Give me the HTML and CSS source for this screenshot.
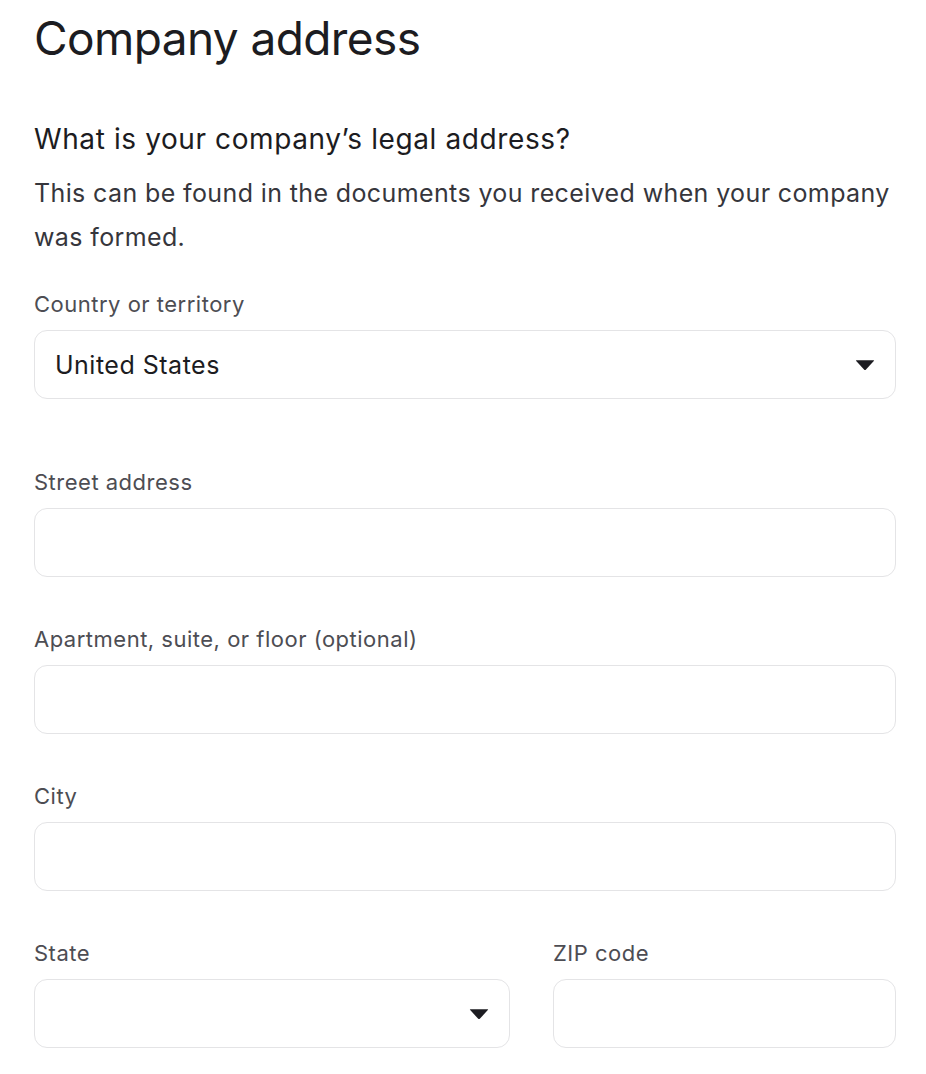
FILE: index.html
```html
<!DOCTYPE html>
<html lang="en">
<head>
<meta charset="utf-8">
<title>Company address</title>
<link rel="stylesheet" href="styles.css">
</head>
<body>
<main class="page">
  <h1 class="title">Company address</h1>
  <h2 class="question">What is your company’s legal address?</h2>
  <p class="hint">This can be found in the documents you received when your company was formed.</p>
  <form class="form">
    <div class="field field-country">
      <label class="label">Country or territory</label>
      <div class="input select">
        <span class="value">United States</span>
        <svg class="caret" width="20" height="12" viewBox="0 0 20 12"><path d="M1.5 1.2 H18.5 Q19.6 1.2 18.8 2.1 L11 10.6 Q10 11.6 9 10.6 L1.2 2.1 Q0.4 1.2 1.5 1.2 Z" fill="#1c1c21"/></svg>
      </div>
    </div>
    <div class="field">
      <label class="label">Street address</label>
      <div class="input"></div>
    </div>
    <div class="field">
      <label class="label">Apartment, suite, or floor (optional)</label>
      <div class="input"></div>
    </div>
    <div class="field">
      <label class="label">City</label>
      <div class="input"></div>
    </div>
    <div class="row">
      <div class="field field-state">
        <label class="label">State</label>
        <div class="input select">
          <span class="value"></span>
          <svg class="caret" width="20" height="12" viewBox="0 0 20 12"><path d="M1.5 1.2 H18.5 Q19.6 1.2 18.8 2.1 L11 10.6 Q10 11.6 9 10.6 L1.2 2.1 Q0.4 1.2 1.5 1.2 Z" fill="#1c1c21"/></svg>
        </div>
      </div>
      <div class="field field-zip">
        <label class="label">ZIP code</label>
        <div class="input"></div>
      </div>
    </div>
  </form>
</main>
</body>
</html>
```
FILE: styles.css
```css
* { box-sizing: border-box; }
html, body { margin: 0; padding: 0; background: #ffffff; }
body {
  font-family: Inter, "Noto Sans", "Liberation Sans", sans-serif;
  color: #1c1c21;
}
.page {
  padding: 0 30px 0 34px;
}
.title {
  margin: 8px 0 0;
  font-size: 46px;
  line-height: 60px;
  font-weight: 400;
  letter-spacing: -0.6px;
  color: #1c1c21;
}
.question {
  margin: 53px 0 0;
  font-size: 28px;
  line-height: 36px;
  font-weight: 400;
  letter-spacing: 0.6px;
  color: #1c1c21;
}
.hint {
  margin: 14px 0 0;
  font-size: 25px;
  line-height: 44px;
  letter-spacing: 0.38px;
  color: #36363c;
}
.form {
  margin-top: 31px;
  display: flex;
  flex-direction: column;
  gap: 48px;
}
.field {
  display: flex;
  flex-direction: column;
  gap: 12px;
}
.field-country { margin-bottom: 21px; }
.label {
  font-size: 22px;
  line-height: 28px;
  letter-spacing: 0.5px;
  color: #4d4d53;
}
.input {
  height: 69px;
  border: 1px solid #e4e4e6;
  border-radius: 13px;
  background: #fff;
}
.select {
  display: flex;
  align-items: center;
  justify-content: space-between;
  padding: 0 20px 0 20px;
}
.value {
  font-size: 25px;
  letter-spacing: 0.5px;
  color: #1c1c21;
}
.caret { display: block; }
.row {
  display: flex;
  gap: 43px;
}
.field-state { flex: 0 0 476px; }
.field-zip { flex: 1; }
```
